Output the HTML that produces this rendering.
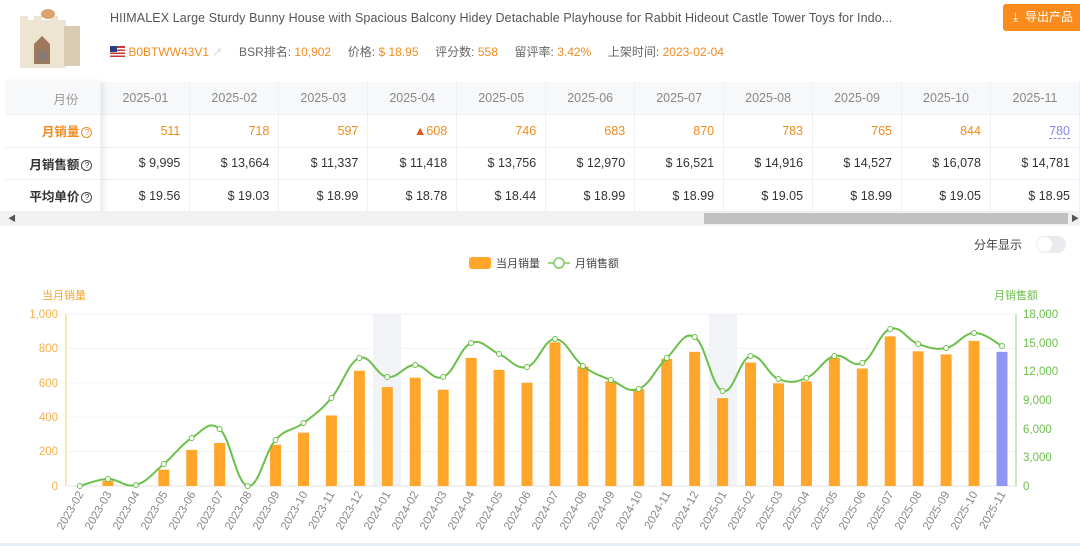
<!DOCTYPE html>
<html><head><meta charset="utf-8">
<style>
*{margin:0;padding:0;box-sizing:border-box}
body{width:1080px;height:546px;overflow:hidden;background:#fff;font-family:"Liberation Sans","Noto Sans CJK SC",sans-serif;position:relative;color:#333}
.abs{position:absolute}
.title{left:110px;top:11px;font-size:12.5px;color:#555;letter-spacing:0.1px;white-space:nowrap}
.meta{left:110px;top:43px;font-size:12px;color:#666;white-space:nowrap}
.meta span.o{color:#f08c1e}
.btn{left:1003px;top:4px;width:80px;height:27px;background:#fa8c1e;border-radius:3px;color:#fff;font-size:12px;line-height:27px;padding-left:10px}
table{border-collapse:collapse;font-size:12.5px}
td{height:32.5px;border-right:1px solid #eef0f3;border-bottom:1px solid #eef0f3;text-align:right;padding-right:9px;width:89px}
tr.h td{background:#f7f8fa;color:#888;text-align:center;padding:0}
td.f{width:96px;font-weight:bold;text-align:right;padding-right:8px;background:#fff}
tr.h td.f{color:#999;font-weight:normal;text-align:right;padding-right:22px;background:#f7f8fa}
.q{display:inline-block;width:11px;height:11px;border:1px solid #444;border-radius:50%;font-size:8px;line-height:9px;text-align:center;font-weight:normal;vertical-align:1px;margin-left:2px}
.or{color:#f08c1e}
</style></head><body>
<div class="abs" style="left:18px;top:8px;width:64px;height:62px">
<svg width="64" height="62"><rect x="2" y="12" width="46" height="48" fill="#ede4d2"/><rect x="46" y="18" width="16" height="40" fill="#d9ccb3"/><rect x="2" y="8" width="8" height="6" fill="#ede4d2"/><rect x="16" y="8" width="8" height="6" fill="#ede4d2"/><rect x="32" y="8" width="8" height="6" fill="#ede4d2"/><path d="M16 56V36l8-8 8 8v20z" fill="#a0785a"/><ellipse cx="30" cy="6" rx="7" ry="5" fill="#d9a46e"/><ellipse cx="24" cy="48" rx="6" ry="7" fill="#8a7a70"/></svg></div>
<div class="abs title">HIIMALEX Large Sturdy Bunny House with Spacious Balcony Hidey Detachable Playhouse for Rabbit Hideout Castle Tower Toys for Indo...</div>
<div class="abs meta"><svg width="15" height="11" style="vertical-align:-1px"><rect width="15" height="11" fill="#c33"/><rect y="2" width="15" height="1.5" fill="#fff"/><rect y="5" width="15" height="1.5" fill="#fff"/><rect y="8" width="15" height="1.5" fill="#fff"/><rect width="7" height="6" fill="#2a3f8c"/></svg> <span class="o">B0BTWW43V1</span> <span style="color:#ccc;font-size:10px">↗</span>&nbsp;&nbsp;&nbsp;&nbsp; BSR排名: <span class="o">10,902</span>&nbsp;&nbsp;&nbsp;&nbsp; 价格: <span class="o">$ 18.95</span>&nbsp;&nbsp;&nbsp;&nbsp; 评分数: <span class="o">558</span>&nbsp;&nbsp;&nbsp;&nbsp; 留评率: <span class="o">3.42%</span>&nbsp;&nbsp;&nbsp;&nbsp; 上架时间: <span class="o">2023-02-04</span></div>
<div class="abs btn">⤓&nbsp; 导出产品</div>

<div class="abs" style="left:5px;top:82px;width:1075px;overflow:hidden">
<table>
<tr class="h"><td class="f">月份</td><td>2025-01</td><td>2025-02</td><td>2025-03</td><td>2025-04</td><td>2025-05</td><td>2025-06</td><td>2025-07</td><td>2025-08</td><td>2025-09</td><td>2025-10</td><td>2025-11</td></tr>
<tr class="or"><td class="f or">月销量<span class="q" style="border-color:#f08c1e;color:#f08c1e">?</span></td><td>511</td><td>718</td><td>597</td><td><span style="color:#e8531e">▲</span>608</td><td>746</td><td>683</td><td>870</td><td>783</td><td>765</td><td>844</td><td><span style="color:#8888e8;border-bottom:1px dashed #8888e8">780</span></td></tr>
<tr><td class="f">月销售额<span class="q">?</span></td><td>$ 9,995</td><td>$ 13,664</td><td>$ 11,337</td><td>$ 11,418</td><td>$ 13,756</td><td>$ 12,970</td><td>$ 16,521</td><td>$ 14,916</td><td>$ 14,527</td><td>$ 16,078</td><td>$ 14,781</td></tr>
<tr><td class="f">平均单价<span class="q">?</span></td><td>$ 19.56</td><td>$ 19.03</td><td>$ 18.99</td><td>$ 18.78</td><td>$ 18.44</td><td>$ 18.99</td><td>$ 18.99</td><td>$ 19.05</td><td>$ 18.99</td><td>$ 19.05</td><td>$ 18.95</td></tr>
</table></div>
<div class="abs" style="left:0;top:82px;width:101px;height:130px;box-shadow:3px 0 5px rgba(0,0,0,.08)"></div>
<div class="abs" style="left:0;top:211px;width:1080px;height:15px;background:#f1f1f1"></div>
<div class="abs" style="left:704px;top:213px;width:364px;height:11px;background:#c1c1c1"></div>
<div class="abs" style="left:8px;top:213px;font-size:8px;color:#555">◀</div>
<div class="abs" style="left:1071px;top:213px;font-size:8px;color:#555">▶</div>

<div class="abs" style="left:974px;top:236px;font-size:12px;color:#444">分年显示</div>
<div class="abs" style="left:1036px;top:236px;width:30px;height:17px;border-radius:9px;background:#e9ebee"><div style="width:15px;height:15px;margin:1px;border-radius:50%;background:#fff"></div></div>

<svg class="abs" style="left:0;top:0" width="1080" height="546" font-family="Liberation Sans, Noto Sans CJK SC, sans-serif">
<rect x="469" y="257" width="22" height="12" rx="3" fill="#ffa62b"/>
<text x="496" y="267" font-size="11" fill="#444">当月销量</text>
<line x1="548" y1="263" x2="570" y2="263" stroke="#7ccc5c" stroke-width="1.5"/><circle cx="559" cy="263" r="5" fill="#fff" stroke="#7ccc5c" stroke-width="1.5"/>
<text x="575" y="267" font-size="11" fill="#444">月销售额</text>
<text x="42" y="299" font-size="11" fill="#f7a52c">当月销量</text>
<text x="994" y="299" font-size="11" fill="#6cbf4a">月销售额</text>
<rect x="373" y="314" width="28" height="172" fill="#f1f3f7"/>
<rect x="709" y="314" width="28" height="172" fill="#f1f3f7"/>
<g stroke="#f2f3f5" stroke-width="1">
<line x1="66" y1="314" x2="1016" y2="314"/><line x1="66" y1="348.4" x2="1016" y2="348.4"/><line x1="66" y1="382.8" x2="1016" y2="382.8"/><line x1="66" y1="417.2" x2="1016" y2="417.2"/><line x1="66" y1="451.6" x2="1016" y2="451.6"/>
</g>
<line x1="66" y1="314" x2="66" y2="486" stroke="#ffc56e"/>
<line x1="1016" y1="314" x2="1016" y2="486" stroke="#8fd46e"/>
<line x1="66" y1="486" x2="1016" y2="486" stroke="#e0e3e8"/>
<g font-size="11.5" fill="#f7b04a" text-anchor="end">
<text x="58" y="318">1,000</text><text x="58" y="352">800</text><text x="58" y="387">600</text><text x="58" y="421">400</text><text x="58" y="455">200</text><text x="58" y="490">0</text></g>
<g font-size="11.5" fill="#6cbf4a">
<text x="1023" y="318">18,000</text><text x="1023" y="347">15,000</text><text x="1023" y="375">12,000</text><text x="1023" y="404">9,000</text><text x="1023" y="433">6,000</text><text x="1023" y="461">3,000</text><text x="1023" y="490">0</text></g>
<g id="bars"></g>
<path id="ln" fill="none" stroke="#6cc04a" stroke-width="2"/>
<g id="dots"></g>
<g font-size="11.5" fill="#888" text-anchor="end">
<text transform="translate(84,494) rotate(-60)">2023-02</text>
<text transform="translate(112,494) rotate(-60)">2023-03</text>
<text transform="translate(140,494) rotate(-60)">2023-04</text>
<text transform="translate(168,494) rotate(-60)">2023-05</text>
<text transform="translate(196,494) rotate(-60)">2023-06</text>
<text transform="translate(224,494) rotate(-60)">2023-07</text>
<text transform="translate(252,494) rotate(-60)">2023-08</text>
<text transform="translate(280,494) rotate(-60)">2023-09</text>
<text transform="translate(308,494) rotate(-60)">2023-10</text>
<text transform="translate(335,494) rotate(-60)">2023-11</text>
<text transform="translate(363,494) rotate(-60)">2023-12</text>
<text transform="translate(391,494) rotate(-60)">2024-01</text>
<text transform="translate(419,494) rotate(-60)">2024-02</text>
<text transform="translate(447,494) rotate(-60)">2024-03</text>
<text transform="translate(475,494) rotate(-60)">2024-04</text>
<text transform="translate(503,494) rotate(-60)">2024-05</text>
<text transform="translate(531,494) rotate(-60)">2024-06</text>
<text transform="translate(559,494) rotate(-60)">2024-07</text>
<text transform="translate(587,494) rotate(-60)">2024-08</text>
<text transform="translate(615,494) rotate(-60)">2024-09</text>
<text transform="translate(643,494) rotate(-60)">2024-10</text>
<text transform="translate(671,494) rotate(-60)">2024-11</text>
<text transform="translate(699,494) rotate(-60)">2024-12</text>
<text transform="translate(727,494) rotate(-60)">2025-01</text>
<text transform="translate(755,494) rotate(-60)">2025-02</text>
<text transform="translate(783,494) rotate(-60)">2025-03</text>
<text transform="translate(810,494) rotate(-60)">2025-04</text>
<text transform="translate(838,494) rotate(-60)">2025-05</text>
<text transform="translate(866,494) rotate(-60)">2025-06</text>
<text transform="translate(894,494) rotate(-60)">2025-07</text>
<text transform="translate(922,494) rotate(-60)">2025-08</text>
<text transform="translate(950,494) rotate(-60)">2025-09</text>
<text transform="translate(978,494) rotate(-60)">2025-10</text>
<text transform="translate(1006,494) rotate(-60)">2025-11</text>
</g>
</svg>
<div class="abs" style="left:0;top:543px;width:1080px;height:3px;background:#e6eef5"></div>
<script>
var s=[0,30,0,95,210,250,0,240,310,410,670,575,630,560,745,675,600,835,695,610,565,740,780,511,718,597,608,746,683,870,783,765,844,780];
var ly=[486,479,485,464,438,429,486,440,423,398,358,377,365,377,343,354,367,339,366,380,389,358,337,391,356,379,378,356,363,329,344,348,333,346];
var b='',d='',pts=[];
for(var i=0;i<34;i++){var c=79.97+27.94*i,h=s[i]*0.172;
if(h>0)b+='<rect x="'+(c-5.5)+'" y="'+(486-h)+'" width="11" height="'+h+'" fill="'+(i==33?'#8f97f2':'#ffa62b')+'"/>';
pts.push([c,ly[i]]);d+='<circle cx="'+c+'" cy="'+ly[i]+'" r="2.5" fill="#fff" stroke="#6cc04a" stroke-width="1"/>';}
document.getElementById('bars').innerHTML=b;
var p='M'+pts[0][0]+' '+pts[0][1];
for(i=0;i<33;i++){var p0=pts[Math.max(i-1,0)],p1=pts[i],p2=pts[i+1],p3=pts[Math.min(i+2,33)],t=0.2;
p+=' C'+(p1[0]+(p2[0]-p0[0])*t)+' '+(p1[1]+(p2[1]-p0[1])*t)+' '+(p2[0]-(p3[0]-p1[0])*t)+' '+(p2[1]-(p3[1]-p1[1])*t)+' '+p2[0]+' '+p2[1];}
document.getElementById('ln').setAttribute('d',p);
document.getElementById('dots').innerHTML=d;
</script>
</body></html>
